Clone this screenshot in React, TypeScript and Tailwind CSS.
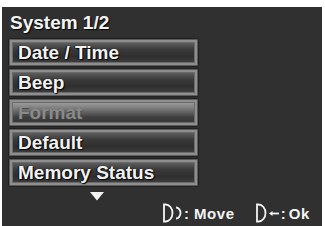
import React from "react";

const items = [
  { label: "Date / Time", active: false },
  { label: "Beep", active: false },
  { label: "Format", active: true },
  { label: "Default", active: false },
  { label: "Memory Status", active: false },
];

function MenuButton({ label, active }: { label: string; active: boolean }) {
  return (
    <div className="h-[27px] w-[189px] rounded-[1px] bg-[#5a5a5a] p-[1px] shadow-[0_0_1px_1px_#222]">
      <div className="h-full w-full border-[2px] border-[#8e8e8e] bg-[#6a6a6a] p-[1px]">
        <div
          className={
            active
              ? "flex h-full w-full items-center bg-[linear-gradient(to_bottom,#9a9a9a_0%,#7a7a7a_30%,#3e3e3e_75%,#383838_100%)] pl-[5px]"
              : "flex h-full w-full items-center bg-[linear-gradient(to_bottom,#5c5c5c_0%,#3a3a3a_35%,#2e2e2e_70%,#3c3c3c_100%)] pl-[5px]"
          }
        >
          <span
            className={
              active
                ? "text-[19px] font-bold leading-none text-[#8a8a8a] [text-shadow:0_1px_1px_#444]"
                : "text-[19px] font-bold leading-none text-[#f2f2f2] [text-shadow:1px_1px_1px_#000,-1px_0_1px_#111]"
            }
          >
            {label}
          </span>
        </div>
      </div>
    </div>
  );
}

export default function App() {
  return (
    <div
      className="h-[226px] w-[325px] bg-white pl-[2px] pt-[7px]"
      style={{ fontFamily: '"Liberation Sans", Arial, sans-serif' }}
    >
      <div className="flex h-[219px] w-[320px] flex-col bg-[#303030]">
        <div className="flex h-[30px] items-center pl-[8px] pt-[1px]">
          <span className="text-[19px] font-bold leading-none text-[#f4f4f4] [text-shadow:1px_1px_1px_#000]">
            System 1/2
          </span>
        </div>
        <div className="mt-[2px] flex flex-col gap-[3px] pl-[7px]">
          {items.map((it) => (
            <MenuButton key={it.label} label={it.label} active={it.active} />
          ))}
        </div>
        <div className="mt-[6px] flex pl-[88px]">
          <svg width="14" height="9" viewBox="0 0 14 9">
            <polygon points="0,0 14,0 7,8.5" fill="#f4f4f4" />
          </svg>
        </div>
        <div className="mt-[2px] flex items-center pl-[160px] text-[15px] font-bold leading-none text-[#f4f4f4]">
          <svg width="20" height="20" viewBox="0 0 20 20" className="shrink-0">
            <path d="M2 1.5 L3.5 1.5 A7 8.5 0 0 1 3.5 18.5 L2 18.5 Z" fill="none" stroke="#f4f4f4" strokeWidth="1.8" />
            <path d="M14 4.5 A4.5 5.5 0 0 1 14 15.5" fill="none" stroke="#f4f4f4" strokeWidth="1.8" />
          </svg>
          <span className="ml-[2px]">:</span>
          <span className="ml-[5px] tracking-[0.6px]">Move</span>
          <svg width="26" height="20" viewBox="0 0 26 20" className="ml-[20px] shrink-0">
            <path d="M2 1.5 L3.5 1.5 A7 8.5 0 0 1 3.5 18.5 L2 18.5 Z" fill="none" stroke="#f4f4f4" strokeWidth="1.8" />
            <path d="M16 10.5 L24 10.5" stroke="#f4f4f4" strokeWidth="1.8" />
            <polygon points="14,10.5 17.5,8 17.5,13" fill="#f4f4f4" />
          </svg>
          <span className="ml-[0px]">:</span>
          <span className="ml-[3px] tracking-[0.6px]">Ok</span>
        </div>
      </div>
    </div>
  );
}
